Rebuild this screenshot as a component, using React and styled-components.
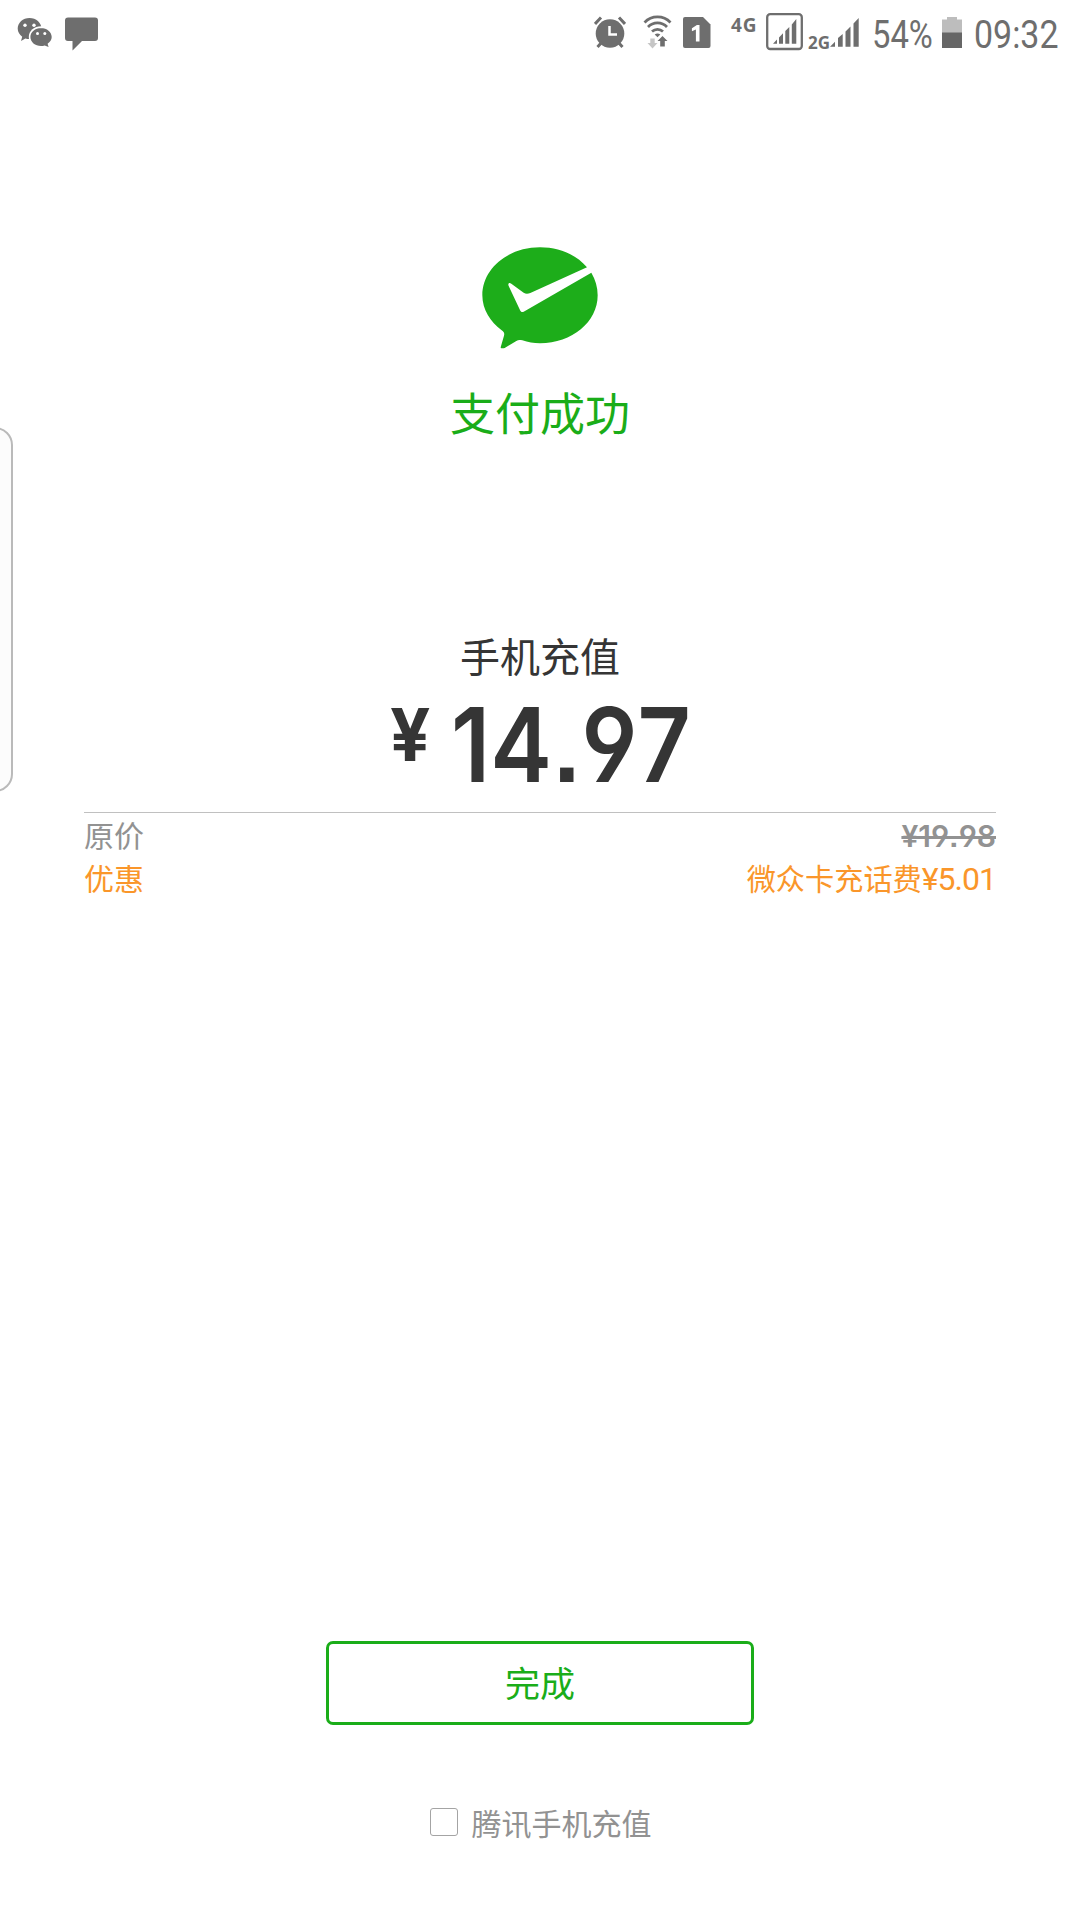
import React from "react";
import styled, { createGlobalStyle } from "styled-components";

const GlobalStyle = createGlobalStyle`
  body {
    margin: 0;
    background: #fff;
    font-family: Roboto, "Noto Sans CJK SC", sans-serif;
  }
`;

const Screen = styled.div`
  position: relative;
  display: flex;
  flex-direction: column;
  align-items: center;
  width: 1080px;
  height: 1920px;
  overflow: hidden;
  background: #fff;
`;

const StatusBar = styled.div`
  display: flex;
  justify-content: space-between;
  width: 1080px;
  height: 66px;
  color: #6e6e6e;
`;

const StatusGroup = styled.div`
  display: flex;
  align-items: flex-start;
  padding: 0 21px 0 17px;
`;

const StatusIcon = styled.svg`
  display: block;
  flex: none;
  margin-left: ${({ $gap }) => $gap || 0}px;
  fill: currentColor;
`;

const NetworkLabel = styled.span`
  flex: none;
  width: ${({ $width }) => $width}px;
  margin-top: ${({ $top }) => $top}px;
  margin-left: ${({ $gap }) => $gap || 0}px;
  font-family: "Open Sans", sans-serif;
  font-size: ${({ $size }) => $size}px;
  font-weight: 700;
  line-height: 24px;
  letter-spacing: ${({ $spacing }) => $spacing || 0}px;
  white-space: nowrap;
`;

const StatusText = styled.span`
  flex: none;
  width: ${({ $width }) => $width}px;
  margin-left: ${({ $gap }) => $gap}px;
  font-size: 39px;
  line-height: 70px;
  white-space: nowrap;
  transform: scaleX(${({ $scale }) => $scale});
  transform-origin: left;
`;

const EdgeHandle = styled.div`
  position: absolute;
  top: 427px;
  left: -31px;
  box-sizing: border-box;
  width: 44px;
  height: 365px;
  border: 2px solid #bababa;
  border-radius: 18px;
  background: #fcfcfc;
`;

const Logo = styled.svg`
  display: block;
  margin-top: 181px;
`;

const ResultText = styled.div`
  margin-top: 34px;
  color: #1aad19;
  font-size: 45px;
  line-height: 66px;
`;

const Product = styled.div`
  margin-top: 180px;
  color: #353535;
  font-size: 40px;
  line-height: 60px;
`;

const Amount = styled.div`
  display: flex;
  align-items: flex-start;
  width: 300px;
  height: 123px;
  color: #353535;
  font-family: Inter, sans-serif;
  font-feature-settings: "cv04", "ss07";
  font-optical-sizing: none;
`;

const Currency = styled.span`
  flex: none;
  width: 55px;
  font-size: 73px;
  font-weight: 700;
  line-height: 92px;
  transform: scaleX(0.97);
  transform-origin: left;
`;

const Figure = styled.span`
  flex: none;
  margin-left: 6px;
  font-size: 103px;
  font-weight: 600;
  line-height: 111px;
  font-kerning: none;
  transform: scaleX(0.9);
  transform-origin: left;
`;

const Details = styled.div`
  width: 912px;
  padding-top: 2px;
  border-top: 1px solid #c0c0c0;
`;

const DetailRow = styled.div`
  display: flex;
  justify-content: space-between;
  height: 43px;
  color: ${({ $color }) => $color};
  font-size: 30px;
  line-height: 43px;
`;

const OldPrice = styled.span`
  font-family: Inter, sans-serif;
  font-feature-settings: "cv04", "ss07";
  font-optical-sizing: none;
  font-kerning: none;
  font-weight: 600;
  text-decoration: line-through;
`;

const Discount = styled.span`
  font-size: 29.2px;
`;

const DiscountPrice = styled.span`
  font-size: 32px;
  letter-spacing: -1px;
`;

const DoneButton = styled.button`
  box-sizing: border-box;
  width: 428px;
  height: 84px;
  margin-top: 740px;
  padding: 6px 0 0;
  border: 3px solid #1aad19;
  border-radius: 7px;
  background: #fff;
  color: #1aad19;
  font-family: inherit;
  font-size: 35px;
  line-height: 72px;
`;

const FollowLabel = styled.label`
  display: flex;
  align-items: center;
  gap: 14px;
  margin-top: 72px;
  padding-left: 1px;
  color: #929292;
  font-size: 30px;
  line-height: 44px;
`;

const FollowText = styled.span`
  padding-top: 6px;
`;

const CheckBox = styled.span`
  box-sizing: border-box;
  width: 28px;
  height: 28px;
  border: 1.5px solid #a4a4a4;
  border-radius: 3px;
`;

const details = [
  { label: "原价", price: "¥19.98", color: "#929292", old: true },
  { label: "优惠", note: "微众卡充话费", price: "¥5.01", color: "#fa962a" },
];

const WeChatIcon = () => (
  <StatusIcon width="35" height="66" viewBox="17 0 35 66">
    <path d="M29.5 18c-6.6 0-11.8 4.8-11.8 10.6 0 3.4 1.8 6.2 4.5 8.1L21 41l4.4-2.5c1.3.4 2.7.5 4.1.5 6.6 0 12-4.6 12-10.4S36.1 18 29.5 18Z" />
    <ellipse cx="41" cy="37" rx="12.2" ry="10.8" fill="#fff" />
    <path d="M41 28c-5.9 0-10.6 4-10.6 9s4.7 9 10.6 9c1.3 0 2.6-.2 3.7-.6L48.6 47l-1-3.3c2.5-1.6 4.1-4 4.1-6.7 0-5-4.8-9-10.7-9Z" />
    <g fill="#fff">
      <circle cx="25" cy="25.3" r="1.7" />
      <circle cx="34" cy="25.3" r="1.7" />
      <circle cx="37.5" cy="33.5" r="1.5" />
      <circle cx="44.8" cy="33.5" r="1.5" />
    </g>
  </StatusIcon>
);

const MessageIcon = () => (
  <StatusIcon $gap={13} width="33" height="66" viewBox="65 0 33 66">
    <path d="M68 17.5h27a3 3 0 0 1 3 3V38a3 3 0 0 1-3 3H82l-9.5 9.5V41H68a3 3 0 0 1-3-3V20.5a3 3 0 0 1 3-3Z" />
  </StatusIcon>
);

const AlarmIcon = () => (
  <StatusIcon width="32" height="66" viewBox="594 0 32 66">
    <circle cx="610" cy="33.5" r="14.3" />
    <g fill="none" stroke="currentColor" strokeWidth="3">
      <path d="m595 24 6-6.5M625 24l-6-6.5M602 42l-4.5 5M618 42l4.5 5" />
    </g>
    <path d="M609.5 26v8.5h7.5" fill="none" stroke="#fff" strokeWidth="2.5" />
  </StatusIcon>
);

const WifiIcon = () => (
  <StatusIcon $gap={17} width="30" height="66" viewBox="643 0 30 66">
    <g fill="none" stroke="currentColor" strokeWidth="2.7">
      <path d="M644.5 22.5a18 18 0 0 1 26 0" />
      <path d="M648 27a13 13 0 0 1 19 0" />
      <path d="M652 31.5a8 8 0 0 1 11 0" />
    </g>
    <path d="M654.7 34.5q2.8-2 5.6 0l-2.8 2.7Z" />
    <path d="m662.5 36 5 5h-2.7v5.5h-4.6V41h-2.7Z" />
    <path d="M650.3 38.5h4.4V43h2.8l-5 5.5-5-5.5h2.8Z" fill="#c6c6c6" />
  </StatusIcon>
);

const SimIcon = () => (
  <StatusIcon $gap={10} width="28" height="66" viewBox="683 0 28 66">
    <path d="M685 17h18l7.5 7.5V46a2 2 0 0 1-2 2H685a2 2 0 0 1-2-2V19a2 2 0 0 1 2-2Z" />
    <path d="M699.5 25v16.5h-3.6V29.6l-4 1.6v-3l5-3.2Z" fill="#fff" />
  </StatusIcon>
);

const BoxedSignalIcon = () => (
  <StatusIcon $gap={10} width="37" height="66" viewBox="766 0 37 66">
    <rect x="767.2" y="14.2" width="34.6" height="34.8" rx="3" fill="none" stroke="currentColor" strokeWidth="2.3" />
    <path d="M773 43.7l4-4.2v4.2ZM779 37.5l4-4.3v10.5h-4ZM785.3 31l4-4v16.7h-4ZM791.8 24.5l4.5-5.5v24.7h-4.5Z" />
  </StatusIcon>
);

const SignalIcon = () => (
  <StatusIcon width="29" height="66" viewBox="830 0 29 66">
    <path d="M830 46.7l5-5v5ZM838 38l4.7-4v12.7H838ZM845.5 31.5l5-5v20.2h-5ZM853.5 23.5l5.2-5.5v28.7h-5.2Z" />
  </StatusIcon>
);

const BatteryIcon = () => (
  <StatusIcon $gap={10} width="20" height="66" viewBox="942 0 20 66">
    <path d="M947 17h10v2.5h5V33h-20V19.5h5Z" fill="#bdbdbd" />
    <path d="M942 32.5h20V48h-20Z" fill="#666" />
  </StatusIcon>
);

const App = () => {
  return (
    <>
      <GlobalStyle />
      <Screen>
        <StatusBar>
          <StatusGroup>
            <WeChatIcon />
            <MessageIcon />
          </StatusGroup>
          <StatusGroup>
            <AlarmIcon />
            <WifiIcon />
            <SimIcon />
            <NetworkLabel $gap={20} $width={25} $top={13} $size={19} $spacing={1}>
              4G
            </NetworkLabel>
            <BoxedSignalIcon />
            <NetworkLabel $gap={5} $width={22} $top={31} $size={17}>
              2G
            </NetworkLabel>
            <SignalIcon />
            <StatusText $gap={13} $width={60} $scale={0.84}>
              54%
            </StatusText>
            <BatteryIcon />
            <StatusText $gap={12} $width={85} $scale={0.87}>
              09:32
            </StatusText>
          </StatusGroup>
        </StatusBar>
        <Logo width="116" height="102" viewBox="155 50 348 306">
          <path
            d="M329 51C233 51 156 115 156 195c0 44 25 80 57 104 8 6 10 9 8 17l-10 35c-1 3 7 4 12 2l35-21c6-4 11-3 18-2 17 6 34 9 53 9 96 0 173-64 173-144 0-25-7-48-19-68L280 244c-5 2-8 0-10-3l-35-74c-3-7 1-12 8-7l37 27c6 4 12 4 20 1L470 111C438 73 387 51 329 51Z"
            fill="#1dad1a"
          />
        </Logo>
        <ResultText>支付成功</ResultText>
        <Product>手机充值</Product>
        <Amount>
          <Currency>¥</Currency>
          <Figure>14.97</Figure>
        </Amount>
        <Details>
          {details.map((d) => (
            <DetailRow key={d.label} $color={d.color}>
              <span>{d.label}</span>
              {d.old ? (
                <OldPrice>{d.price}</OldPrice>
              ) : (
                <Discount>
                  {d.note}
                  <DiscountPrice>{d.price}</DiscountPrice>
                </Discount>
              )}
            </DetailRow>
          ))}
        </Details>
        <DoneButton>完成</DoneButton>
        <FollowLabel>
          <CheckBox />
          <FollowText>腾讯手机充值</FollowText>
        </FollowLabel>
        <EdgeHandle />
      </Screen>
    </>
  );
};

export default App;
